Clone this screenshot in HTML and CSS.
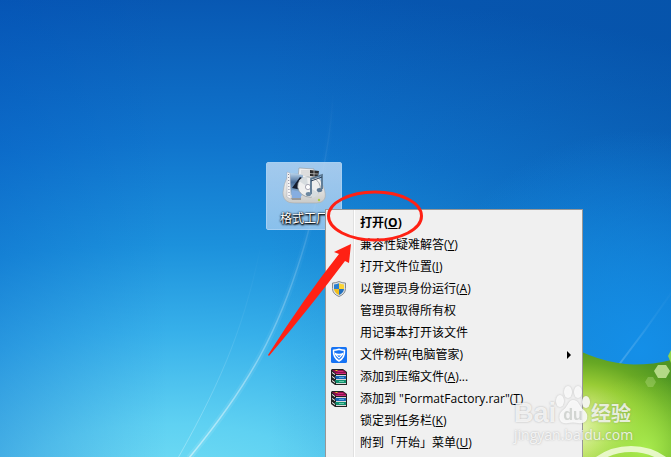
FILE: index.html
```html
<!DOCTYPE html>
<html lang="zh-CN">
<head>
    <meta charset="utf-8">
    <title>格式工厂</title>
    <link rel="stylesheet" href="styles.css">
</head>
<body>
<div class="desktop">
    <svg class="wallpaper" viewBox="0 0 671 457" preserveAspectRatio="xMidYMid slice" aria-hidden="true">
        <defs>
            <radialGradient id="sky" gradientUnits="userSpaceOnUse" cx="0" cy="0" r="1" gradientTransform="translate(170 500) scale(1150 510)">
                <stop offset="0" stop-color="#76e0f4"/>
                <stop offset=".15" stop-color="#5fd1f2"/>
                <stop offset=".33" stop-color="#37b0ea"/>
                <stop offset=".5" stop-color="#1c91dc"/>
                <stop offset=".7" stop-color="#1075cd"/>
                <stop offset="1" stop-color="#0756b1"/>
            </radialGradient>
            <linearGradient id="edge" x1="0" y1="0" x2="1" y2="0">
                <stop offset="0" stop-color="#0050c0" stop-opacity=".25"/>
                <stop offset=".25" stop-color="#0050c0" stop-opacity="0"/>
            </linearGradient>
            <linearGradient id="corner" x1="0" y1="0" x2="1" y2="0">
                <stop offset=".4" stop-color="#0550a0" stop-opacity="0"/>
                <stop offset="1" stop-color="#0550a0" stop-opacity=".35"/>
            </linearGradient>
            <radialGradient id="right" gradientUnits="userSpaceOnUse" cx="640" cy="350" r="220">
                <stop offset="0" stop-color="#148fe8"/>
                <stop offset="1" stop-color="#148fe8" stop-opacity="0"/>
            </radialGradient>
            <linearGradient id="beam" x1="0" y1="1" x2="0" y2="0">
                <stop offset="0" stop-color="#fff" stop-opacity=".5"/>
                <stop offset=".3" stop-color="#fff" stop-opacity=".3"/>
                <stop offset=".6" stop-color="#fff" stop-opacity=".12"/>
                <stop offset="1" stop-color="#fff" stop-opacity="0"/>
            </linearGradient>
            <radialGradient id="hill" gradientUnits="userSpaceOnUse" cx="0" cy="0" r="1" gradientTransform="translate(578 430) scale(115 85)">
                <stop offset="0" stop-color="#f1f9c4"/>
                <stop offset=".25" stop-color="#d3ea80"/>
                <stop offset=".55" stop-color="#98cc35"/>
                <stop offset=".8" stop-color="#67a824"/>
                <stop offset="1" stop-color="#4f9622"/>
            </radialGradient>
            <radialGradient id="grass" gradientUnits="userSpaceOnUse" cx="645" cy="450" r="75">
                <stop offset="0" stop-color="#a9ec4f"/>
                <stop offset="1" stop-color="#8fd83c" stop-opacity="0"/>
            </radialGradient>
        </defs>
        <path fill="url(#sky)" d="M0 0h671v457H0z"/>
        <path fill="url(#edge)" d="M0 0h671v457H0z"/>
        <path fill="url(#corner)" d="M0 0h671v457H0z"/>
        <path fill="url(#right)" d="M400 0h271v457H400z"/>
        <g fill="none" stroke="url(#beam)">
            <path stroke-width="6" stroke-opacity=".2" d="M189 458C250 384 280 330 306 240 324 176 332 130 333 90"/>
            <path stroke-width="1.500" d="M189 458C250 384 280 330 306 240 324 176 332 130 333 90"/>
            <path stroke-opacity=".6" d="M178 458C225 375 246 320 262 240"/>
            <path stroke-opacity=".4" stroke-width="2" d="M618 366Q650 325 680 280"/>
        </g>
        <path fill="url(#hill)" d="M560 341Q600 364 634 364.500 654 364.500 671 360V457H560z"/>
        <path fill="url(#grass)" d="M560 375H671V457H560z"/>
        <g fill="#cdeaa0">
            <path fill-opacity=".8" d="M658 365h8l4 6-4 7h-8l-4-7z"/>
            <path fill-opacity=".3" d="M648 377h5l3 5-3 5h-5l-3-5z"/>
            <path fill="#8ed44a" d="M671 350l-3 6 3 7z"/>
        </g>
        <circle cx="631" cy="507" r="58" fill="none" stroke="#f2fbdc" stroke-opacity=".85" stroke-width="6"/>
    </svg>

    <button class="shortcut" type="button">
        <svg class="shortcut-icon" viewBox="0 0 48 40" aria-hidden="true">
            <defs>
                <linearGradient id="base" x1="0" y1="0" x2="0" y2="1">
                    <stop offset="0" stop-color="#fff"/>
                    <stop offset="1" stop-color="#c9cac8"/>
                </linearGradient>
                <linearGradient id="film" x1="0" y1="0" x2="0" y2="1">
                    <stop offset="0" stop-color="#bcd7ee"/>
                    <stop offset=".4" stop-color="#4a6d98"/>
                    <stop offset="1" stop-color="#9dc3e6"/>
                </linearGradient>
            </defs>
            <path fill="url(#base)" stroke="#aaa" stroke-width=".6" d="M10 8Q5 13 3.500 23q-2 8 3 12 2 2 8 2h22q6 0 8-4 2-4-1-12-2-7-8-12z"/>
            <path fill="#eee" stroke="#888" stroke-width=".5" d="M19 2l15 1-1 10-15-1z"/>
            <path stroke="#bbb" stroke-width=".7" d="M21 5h10M21 7h10M20 9h10"/>
            <path fill="#2c2c2c" d="M30 4l9 1-1 6-8-1z"/>
            <path stroke="#ccc" stroke-width=".7" d="M34 4v7M30 7.500l8 .5"/>
            <path fill="url(#film)" d="M10 7l13 2-1 21-12-1z"/>
            <path fill="#141c2e" d="M12 22l8-11 2 1v12z"/>
            <path fill="#f7f7f7" stroke="#99a" stroke-width=".4" d="M7 6l3 1 1 26-4-2z"/>
            <path stroke="#889" stroke-width="1" stroke-dasharray="1 2" d="M8.500 8l.6 22"/>
            <path fill="#86ade0" d="M12 24l9 2v7l-9-1z"/>
            <path fill="#999" d="M11 32h10v2H12z"/>
            <ellipse cx="29" cy="21" rx="11.500" ry="10" fill="#eeefef" stroke="#8e969b" stroke-width=".7" transform="rotate(18 29 21)"/>
            <path fill="#d6dcdf" d="M28 21l-9-6q4-5 8-4zM30 22l9 5q-2 4-7 5z"/>
            <circle cx="28" cy="21" r="2.600" fill="#fff" stroke="#889" stroke-width=".7"/>
            <path fill="none" stroke="#587691" stroke-width="1.800" d="M31 28V13l11-4v14"/>
            <path stroke="#2c4058" d="M31 15l11-4"/>
            <ellipse cx="28.500" cy="28" rx="2.800" ry="2" fill="#6c88a0"/>
            <ellipse cx="39.500" cy="24" rx="2.800" ry="2" fill="#5b7894"/>
            <circle cx="39" cy="34" r="1.200" fill="#a9cf45"/>
        </svg>
        <span class="shortcut-name">格式工厂</span>
    </button>

    <div class="menu" role="menu">
        <button class="menu-item default" type="button" role="menuitem"><span class="menu-icon"></span><span>打开(<u>O</u>)</span></button>
        <button class="menu-item" type="button" role="menuitem"><span class="menu-icon"></span><span>兼容性疑难解答(<u>Y</u>)</span></button>
        <button class="menu-item" type="button" role="menuitem"><span class="menu-icon"></span><span>打开文件位置(<u>I</u>)</span></button>
        <button class="menu-item" type="button" role="menuitem">
            <span class="menu-icon">
                <svg viewBox="0 0 16 16" aria-hidden="true">
                    <path fill="#dfe3e5" stroke="#858a8e" d="M8 .5Q11 2 14.500 2V7.500Q14.500 13 8 15.500 1.500 13 1.500 7.500V2Q5 2 8 .5z"/>
                    <path fill="#2a7fd0" d="M8 2.200V8H3V3.500Q6 3.300 8 2.200z"/>
                    <path fill="#fbd435" d="M8 2.200V8h5V3.500Q10 3.300 8 2.200z"/>
                    <path fill="#f2be1b" d="M3 8h5v6Q3.500 12 3 8z"/>
                    <path fill="#2370bd" d="M13 8H8v6q4.500-2 5-6z"/>
                </svg>
            </span>
            <span>以管理员身份运行(<u>A</u>)</span>
        </button>
        <button class="menu-item" type="button" role="menuitem"><span class="menu-icon"></span><span>管理员取得所有权</span></button>
        <button class="menu-item" type="button" role="menuitem"><span class="menu-icon"></span><span>用记事本打开该文件</span></button>
        <button class="menu-item" type="button" role="menuitem" aria-haspopup="true">
            <span class="menu-icon">
                <svg viewBox="0 0 16 16" aria-hidden="true">
                    <rect width="16" height="16" rx="1.500" fill="#1673f4"/>
                    <path fill="none" stroke="#fff" stroke-width="1.500" stroke-linejoin="round" d="M8 2.200q3 1 5.500 1Q14 10.500 8 14 2 10.500 2.500 3.200q2.500 0 5.500-1z"/>
                    <path fill="#fff" d="M3.500 5.500Q8 8 12.500 5.500L11.800 8 8 11.800 4.200 8z"/>
                    <path fill="#1673f4" d="M6 8.200q2 .8 4 0l-2 2z"/>
                </svg>
            </span>
            <span>文件粉碎(电脑管家)</span>
            <svg class="submenu" viewBox="0 0 4 8" aria-hidden="true"><path d="M0 0l4 4-4 4z"/></svg>
        </button>
        <button class="menu-item" type="button" role="menuitem">
            <span class="menu-icon">
                <svg viewBox="0 0 16 16" aria-hidden="true">
                    <g id="books">
                        <path fill="#222" d="M1 0h11l4 3v13H4L0 13V1z"/>
                        <path fill="#8d0f4c" d="M1 1h11l3 2v2H5z"/>
                        <path fill="#cf2a7c" d="M6 2h6l1 1H7zM5 4h10v1H5z"/>
                        <path fill="#e7c31f" d="M4 1h2l1 1H5z"/>
                        <path fill="#fff" d="M1 3l3 2v1L1 4zM1 7l3 2v1L1 8zM1 11l3 2v1l-3-2z"/>
                        <path fill="#d8d8d8" d="M5 6h10v1H5zM5 10h10v1H5zM5 14h10v1H5z"/>
                        <path fill="#1765b5" d="M4 7h11v3H5z"/>
                        <path fill="#55a5e3" d="M8 8h5v1H8z"/>
                        <path fill="#12906e" d="M4 11h11v3H5z"/>
                        <path fill="#69cdaa" d="M8 12h5v1H8z"/>
                    </g>
                </svg>
            </span>
            <span>添加到压缩文件(<u>A</u>)...</span>
        </button>
        <button class="menu-item" type="button" role="menuitem">
            <span class="menu-icon"><svg viewBox="0 0 16 16" aria-hidden="true"><use href="#books"/></svg></span>
            <span>添加到 "FormatFactory.rar"(<u>T</u>)</span>
        </button>
        <button class="menu-item" type="button" role="menuitem"><span class="menu-icon"></span><span>锁定到任务栏(<u>K</u>)</span></button>
        <button class="menu-item" type="button" role="menuitem"><span class="menu-icon"></span><span>附到「开始」菜单(<u>U</u>)</span></button>
    </div>

    <!-- 红圈和箭头 -->
    <svg class="pointer" viewBox="260 185 170 180" aria-hidden="true">
        <ellipse cx="375" cy="216" rx="46.500" ry="24"/>
        <path d="M351 244l-17 8 5 2q-35 44-71 101l1 1q43-51 76-95l4 2z"/>
    </svg>

    <div class="watermark">
        <div class="brand">
            <span class="bai">Bai</span>
            <svg class="paw" viewBox="0 0 34 40" aria-hidden="true">
                <ellipse cx="4" cy="16" rx="4" ry="6"/>
                <ellipse cx="12" cy="7" rx="4" ry="6"/>
                <ellipse cx="22" cy="7" rx="4" ry="6"/>
                <ellipse cx="30" cy="17" rx="4" ry="6"/>
                <path d="M17 15q4 0 6 4 2 4 6 7 4 5 1 10-3 3-8 2-5-1-10 0-6 1-8-3-2-5 2-9 4-3 6-7 2-4 5-4z"/>
                <text x="17" y="35" text-anchor="middle">du</text>
            </svg>
            <span class="jingyan">经验</span>
        </div>
        <div class="site">jingyan.baidu.com</div>
    </div>
</div>
</body>
</html>
```
FILE: styles.css
```css
* {
    margin: 0;
    padding: 0;
    box-sizing: border-box;
}
body {
    font-family: "Open Sans", "Noto Sans CJK SC", sans-serif;
    font-size: 12px;
    overflow: hidden;
}
button {
    font: inherit;
    border: none;
    background: none;
}
.desktop {
    position: relative;
    height: 100vh;
    overflow: hidden;
}
.wallpaper {
    display: block;
    width: 100%;
    height: 100%;
}
.shortcut {
    position: absolute;
    left: 266px;
    top: 162px;
    width: 76px;
    padding: 3px 0 1px;
    display: flex;
    flex-direction: column;
    align-items: center;
    gap: 4px;
    border: 1px solid #a6cff2;
    border-radius: 2px;
    background: linear-gradient(rgba(200, 222, 245, .8), rgba(165, 205, 240, .8));
}
.shortcut-icon {
    width: 48px;
    height: 40px;
}
.shortcut-name {
    line-height: 18px;
    color: #fff;
    text-shadow: 0 1px 2px #000, 1px 1px 2px #000, 0 0 2px #000;
}
.menu {
    position: absolute;
    left: 325px;
    top: 209px;
    width: 258px;
    padding: 2px 2px 8px;
    border: 1px solid #979797;
    background: linear-gradient(90deg, transparent 27px, #e0e0e0 27px, #e0e0e0 28px, #fff 28px, #fff 29px, transparent 29px) #f0f0f0;
}
.menu-item {
    width: 100%;
    height: 22px;
    display: flex;
    align-items: center;
    line-height: 22px;
    white-space: nowrap;
    color: #000;
    text-align: left;
}
.menu-item:hover {
    background: rgba(160, 200, 240, .3);
}
.default {
    font-weight: bold;
}
.menu-icon {
    width: 32px;
    height: 16px;
    padding-left: 3px;
}
.menu-icon svg {
    display: block;
    width: 16px;
    height: 16px;
}
.submenu {
    width: 4px;
    height: 8px;
    margin-left: auto;
    margin-right: 9px;
}
.pointer {
    position: absolute;
    left: 260px;
    top: 185px;
    width: 170px;
    height: 180px;
    pointer-events: none;
    fill: #ff2114;
}
.pointer ellipse {
    fill: none;
    stroke: #ff2114;
    stroke-width: 3;
}
.watermark {
    position: absolute;
    left: 514px;
    top: 385px;
    color: rgba(255, 255, 255, .8);
    text-shadow: 0 0 2px rgba(110, 110, 110, .5);
    pointer-events: none;
}
.brand {
    display: flex;
    align-items: flex-end;
    height: 40px;
}
.bai {
    font: bold 27px/24px "Liberation Sans", sans-serif;
}
.paw {
    width: 34px;
    height: 40px;
    fill: rgba(255, 255, 255, .85);
    filter: drop-shadow(0 0 1px rgba(130, 130, 130, .5));
}
.paw text {
    font: bold 16px "Liberation Sans", sans-serif;
    fill: #d2d5d2;
    text-shadow: none;
}
.jingyan {
    margin-left: 1px;
    font: bold 20px/24px "Noto Sans CJK SC", sans-serif;
}
.site {
    font-size: 14px;
    line-height: 20px;
}
```
